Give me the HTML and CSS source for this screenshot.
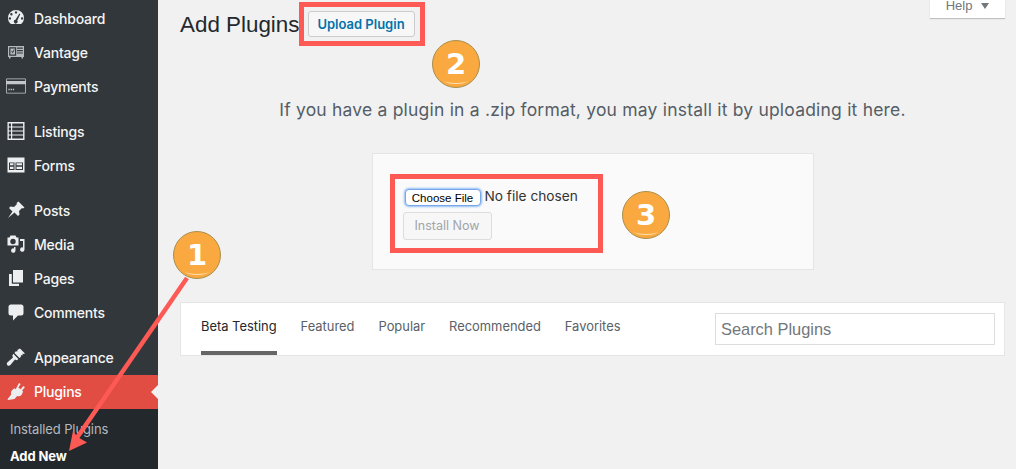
FILE: index.html
```html
<!DOCTYPE html>
<html lang="en">
<head>
  <meta charset="UTF-8" />
  <meta name="viewport" content="width=device-width, initial-scale=1.0"/>
  <title>Add Plugins</title>
  <link rel="stylesheet" href="styles.css">
</head>
<body>
  <aside class="sidebar">
    <ul class="menu">
      <li class="item">
        <svg class="icon" viewBox="0 0 20 20"><path fill-rule="evenodd" d="M10 2a8 8 0 0 0-8 8c0 2.500 1.100 4.600 2.900 6.100h10.200C16.900 14.600 18 12.500 18 10a8 8 0 0 0-8-8zM10 3.200a1.200 1.200 0 1 1 0 2.400 1.200 1.200 0 0 1 0-2.400zM5.400 5.100a1.200 1.200 0 1 1 0 2.400 1.200 1.200 0 0 1 0-2.400zM3.900 9.200a1.200 1.200 0 1 1 0 2.400 1.200 1.200 0 0 1 0-2.400zM16.100 9.200a1.200 1.200 0 1 1 0 2.400 1.200 1.200 0 0 1 0-2.400zM13.400 5.500l.9.600-3 6.400a1.900 1.900 0 1 1-1.800-.7z"/></svg>
        <span>Dashboard</span>
      </li>
      <li class="item">
        <svg class="icon icon-dim" viewBox="0 0 20 20"><path fill-rule="evenodd" d="M2 4h16v11h-1v1.500h-1.500V15h-11v1.500H3V15H2zM3.200 5.200v8.600h7V5.200zM11 5.500v1.200h5.800V5.500zM11 8v1.200h5.800V8zM11 10.400v1.200h5.800v-1.200zM4.400 6.400h4.600v6H4.400zM5.200 9.300l1.600 2 1.900-3.800-.7-.3-1.300 2.600-.9-1z"/></svg>
        <span>Vantage</span>
      </li>
      <li class="item">
        <svg class="icon icon-card" viewBox="0 0 20 20"><path fill-rule="evenodd" d="M0 3.500A1 1 0 0 1 1 2.500h18a1 1 0 0 1 1 1v13a1 1 0 0 1-1 1H1a1 1 0 0 1-1-1zM.8 3.300v1.700h18.400V3.300zM.8 8.200v8.500h18.400V8.200zM2.400 12.800h1.300v1.500H2.400zM4.600 12.800h1.300v1.500H4.600zM6.800 12.800h1.300v1.500H6.800z"/></svg>
        <span>Payments</span>
      </li>
      <li class="gap"></li>
      <li class="item">
        <svg class="icon" viewBox="0 0 20 20"><path fill-rule="evenodd" d="M1.500 1h17v18h-17zM2.800 2.600v2.800h2.200V2.600zM6.200 2.600v2.800h10.900V2.600zM2.800 6.600v2.800h2.200V6.600zM6.200 6.600v2.800h10.900V6.600zM2.800 10.600v2.800h2.200v-2.800zM6.200 10.600v2.800h10.900v-2.800zM2.800 14.600v2.800h2.200v-2.800zM6.200 14.600v2.800h10.900v-2.800z"/></svg>
        <span>Listings</span>
      </li>
      <li class="item">
        <svg class="icon" viewBox="0 0 20 20"><path fill-rule="evenodd" d="M1.500 2.500h17v15h-17zM3 7.500v7.500h5.500V7.500zM4 8.300h3.500v2H4zM4 11.700h3.500v2.300H4zM9.500 7.500v7.500H17V7.500zM10.500 8.300h5.500v2h-5.500zM10.500 11.700h5.500v2.300h-5.500z"/></svg>
        <span>Forms</span>
      </li>
      <li class="gap"></li>
      <li class="item">
        <svg class="icon" viewBox="0 0 20 20"><path d="M12.500 1.500l6 6-1.500 1-1-.5-3 3 .5 3.500-1.500 1.500-3.500-3.500L2 18l4.500-6.500L3 8l1.500-1.500L8 7l3-3-.5-1z"/></svg>
        <span>Posts</span>
      </li>
      <li class="item">
        <svg class="icon" viewBox="0 0 20 20"><path fill-rule="evenodd" d="M1.500 3.500h2l1-2h5l1 2h2v8h-11zM7 4.800a2.700 2.700 0 1 0 0 5.400 2.700 2.700 0 0 0 0-5.400zM14 5h4.500v10.500a2.200 2.200 0 1 1-1.500-2.100V7h-3zM9.500 13v3.500a2.200 2.200 0 1 1-1.500-2.100V13z"/></svg>
        <span>Media</span>
      </li>
      <li class="item">
        <svg class="icon" viewBox="0 0 20 20"><path d="M7 2h10v12.500H7zM3 6h2.800v9.700h7.200V18H3z"/></svg>
        <span>Pages</span>
      </li>
      <li class="item">
        <svg class="icon" viewBox="0 0 20 20"><path d="M5 2.500h10a2.500 2.500 0 0 1 2.500 2.500v6a2.500 2.500 0 0 1-2.500 2.500h-3L7 18.500v-5H5A2.500 2.500 0 0 1 2.500 11V5A2.500 2.500 0 0 1 5 2.500z"/></svg>
        <span>Comments</span>
      </li>
      <li class="gap"></li>
      <li class="item">
        <svg class="icon" viewBox="0 0 20 20"><path d="M14 1.500l5 5-1.700.6-.6-.9-.2 2.200-1.500-.5-.2 2-1.300 1-5-5 1-1.400 2.300-.2-.6-1.300zM7.300 6.800l5.100 5.100-1.500 1.400-1.900-.7-4.600 5.500c-1 1-2.200.9-3 .1s-.8-2 .1-2.900l5.500-4.700-.7-1.900z"/></svg>
        <span>Appearance</span>
      </li>
      <li class="item item-current">
        <svg class="icon" viewBox="0 0 20 20"><path d="M13 2l1.700 1.100-2.400 3.500 2.400 1.700 2.700-3.200 1.500 1.200-2.800 3.300 1 .9-1.300 3c-1 1.600-2.900 2.200-4.600 1.400L8.500 18 2 19l-.5-.7 3.700-4.800c-.5-1.500-.2-3.200.8-4.300l2.400-2 1.300 1z"/></svg>
        <span>Plugins</span>
      </li>
    </ul>
    <ul class="submenu">
      <li>Installed Plugins</li>
      <li class="submenu-current">Add New</li>
    </ul>
  </aside>

  <main class="content">
    <header class="page-head">
      <h1>Add Plugins</h1>
      <a class="upload-btn" href="#">Upload Plugin</a>
      <div class="help-tab">Help <span class="help-arrow"></span></div>
    </header>

    <p class="intro">If you have a plugin in a .zip format, you may install it by uploading it here.</p>

    <form class="upload-card">
      <div class="file-row">
        <span class="choose-btn">Choose File</span>
        <span class="file-name">No file chosen</span>
      </div>
      <span class="install-btn">Install Now</span>
    </form>

    <nav class="filter-bar">
      <a class="tab tab-current" href="#">Beta Testing</a>
      <a class="tab" href="#">Featured</a>
      <a class="tab" href="#">Popular</a>
      <a class="tab" href="#">Recommended</a>
      <a class="tab" href="#">Favorites</a>
      <input class="search" type="text" placeholder="Search Plugins" />
    </nav>
  </main>

  <!-- tutorial markup on top of the screenshot -->
  <div class="mark mark-upload"></div>
  <div class="mark mark-file"></div>
  <div class="step step-1">1</div>
  <div class="step step-2">2</div>
  <div class="step step-3">3</div>
  <svg class="arrow" viewBox="0 0 1016 469">
    <path d="M187 278L74 442" fill="none" stroke="#fd5a55" stroke-width="4.500"/>
    <path d="M69 451L73 431L77.500 437L87 442.500z" fill="#fd5a55"/>
  </svg>
</body>
</html>
```

FILE: styles.css
```css
* {
  box-sizing: border-box;
}

html, body {
  height: 100%;
}

body {
  display: flex;
  margin: 0;
  overflow: hidden;
  background: #f1f1f1;
  font-family: Inter, 'Liberation Sans', sans-serif;
  color: #444;
}

/* sidebar */

.sidebar {
  display: flex;
  flex-direction: column;
  flex: 0 0 158px;
  background: #32373c;
  color: #f4f5f5;
  padding-top: 2px;
}

.menu, .submenu {
  list-style: none;
  margin: 0;
  padding: 0;
}

.item {
  display: flex;
  align-items: center;
  gap: 8px;
  height: 34px;
  padding: 0 0 2px 6px;
  font-size: 14px;
  font-weight: 500;
  letter-spacing: -0.2px;
}

.gap {
  height: 11px;
}

.icon {
  flex: 0 0 20px;
  width: 20px;
  height: 20px;
  fill: #eceeef;
}

.icon-dim {
  fill: #b4b9be;
}

.icon-card {
  fill: #c4c8cb;
}

.item-current {
  position: relative;
  background: #e14d43;
  color: #fff;
}

.item-current::after {
  content: '';
  position: absolute;
  right: 0;
  top: 10px;
  border: 7px solid transparent;
  border-right-color: #f1f1f1;
  border-left-width: 0;
}

.submenu {
  flex: 1;
  padding-top: 10px;
  background: #23282d;
  font-size: 13px;
  letter-spacing: -0.1px;
  color: #b4b9be;
}

.submenu li {
  height: 27px;
  padding-left: 10px;
  line-height: 20px;
}

.submenu .submenu-current {
  color: #fff;
  font-weight: 700;
}

/* main column */

.content {
  flex: 1;
  padding: 0 11px 0 22px;
}

.page-head {
  display: flex;
  align-items: flex-start;
  height: 37px;
}

.page-head h1 {
  margin: 11px 0 0;
  font-family: 'Liberation Sans', sans-serif;
  font-size: 22.400px;
  line-height: 28px;
  font-weight: 400;
  color: #23282d;
}

.upload-btn {
  margin: 11px 0 0 8px;
  width: 107px;
  height: 26px;
  line-height: 24px;
  text-align: center;
  font-size: 13px;
  font-weight: 600;
  text-decoration: none;
  color: #0073aa;
  background: #f7f7f7;
  border: 1px solid #ccc;
  border-radius: 3px;
}

.help-tab {
  display: flex;
  align-items: center;
  justify-content: center;
  gap: 9px;
  margin-left: auto;
  width: 75px;
  height: 18px;
  padding-bottom: 7px;
  font-family: 'Liberation Sans', sans-serif;
  font-size: 13px;
  color: #72777c;
  background: #fff;
  box-shadow: 0 1px 1px rgba(0, 0, 0, 0.2);
}

.help-arrow {
  border: 4px solid transparent;
  border-top: 6px solid #72777c;
  border-bottom-width: 0;
}

.intro {
  margin: 62px 0 0;
  text-align: center;
  font-size: 17.500px;
  letter-spacing: 0.2px;
  line-height: 22px;
  color: #555d66;
}

.upload-card {
  width: 442px;
  height: 117px;
  margin: 32px auto 0;
  padding: 33px 0 0 30px;
  background: #fafafa;
  border: 1px solid #e5e5e5;
}

.file-row {
  display: flex;
  align-items: center;
  height: 22px;
}

.choose-btn {
  width: 76px;
  height: 17px;
  line-height: 16px;
  margin: 0 0 1px 2px;
  text-align: center;
  font-family: 'Liberation Sans', sans-serif;
  font-size: 11.500px;
  color: #000;
  background: #fff;
  border: 1px solid #7aa7e8;
  border-radius: 4px;
  box-shadow: 0 0 2px 1px #8fbdf5;
}

.file-name {
  margin: 0 0 4px 4px;
  font-size: 13.700px;
  color: #333;
}

.install-btn {
  display: block;
  width: 89px;
  height: 28px;
  margin-top: 3px;
  line-height: 26px;
  text-align: center;
  font-size: 12.500px;
  color: #a0a5aa;
  background: #f7f7f7;
  border: 1px solid #ddd;
  border-radius: 3px;
}

.filter-bar {
  display: flex;
  align-items: stretch;
  gap: 24px;
  height: 54px;
  margin-top: 32px;
  padding: 0 9px 0 20px;
  background: #fff;
  border: 1px solid #e5e5e5;
}

.tab {
  padding-top: 14px;
  font-size: 12.900px;
  line-height: 20px;
  text-decoration: none;
  color: #5a6168;
}

.tab-current {
  color: #23282d;
  border-bottom: 4px solid #666;
}

.search {
  align-self: center;
  margin-left: auto;
  width: 280px;
  height: 32px;
  padding: 1px 5px 0;
  font-family: 'Liberation Sans', sans-serif;
  font-size: 16.400px;
  background: #fff;
  border: 1px solid #ddd;
}

.search::placeholder {
  color: #72777c;
  opacity: 1;
}

/* annotations */

.mark {
  position: absolute;
  border: 5px solid #fd5a55;
}

.mark-upload {
  left: 299px;
  top: 2px;
  width: 126px;
  height: 44px;
}

.mark-file {
  left: 390px;
  top: 174px;
  width: 213px;
  height: 79px;
}

.step {
  position: absolute;
  width: 48px;
  height: 48px;
  line-height: 46px;
  text-align: center;
  font-family: 'DejaVu Sans', sans-serif;
  font-size: 29px;
  font-weight: 700;
  color: #fff;
  background: #f9a93f;
  border: 1px solid #a98f4c;
  border-radius: 50%;
}

/* glossy arc along the bottom of the badge */
.step::after {
  content: '';
  position: absolute;
  left: 11px;
  right: 11px;
  bottom: 3px;
  height: 6px;
  border-bottom: 1px solid #fde0b0;
  border-radius: 50%;
}

.step-1 {
  left: 173px;
  top: 231px;
}

.step-2 {
  left: 432px;
  top: 40px;
}

.step-3 {
  left: 622px;
  top: 191px;
}

.arrow {
  position: absolute;
  left: 0;
  top: 0;
  width: 1016px;
  height: 469px;
}
```
